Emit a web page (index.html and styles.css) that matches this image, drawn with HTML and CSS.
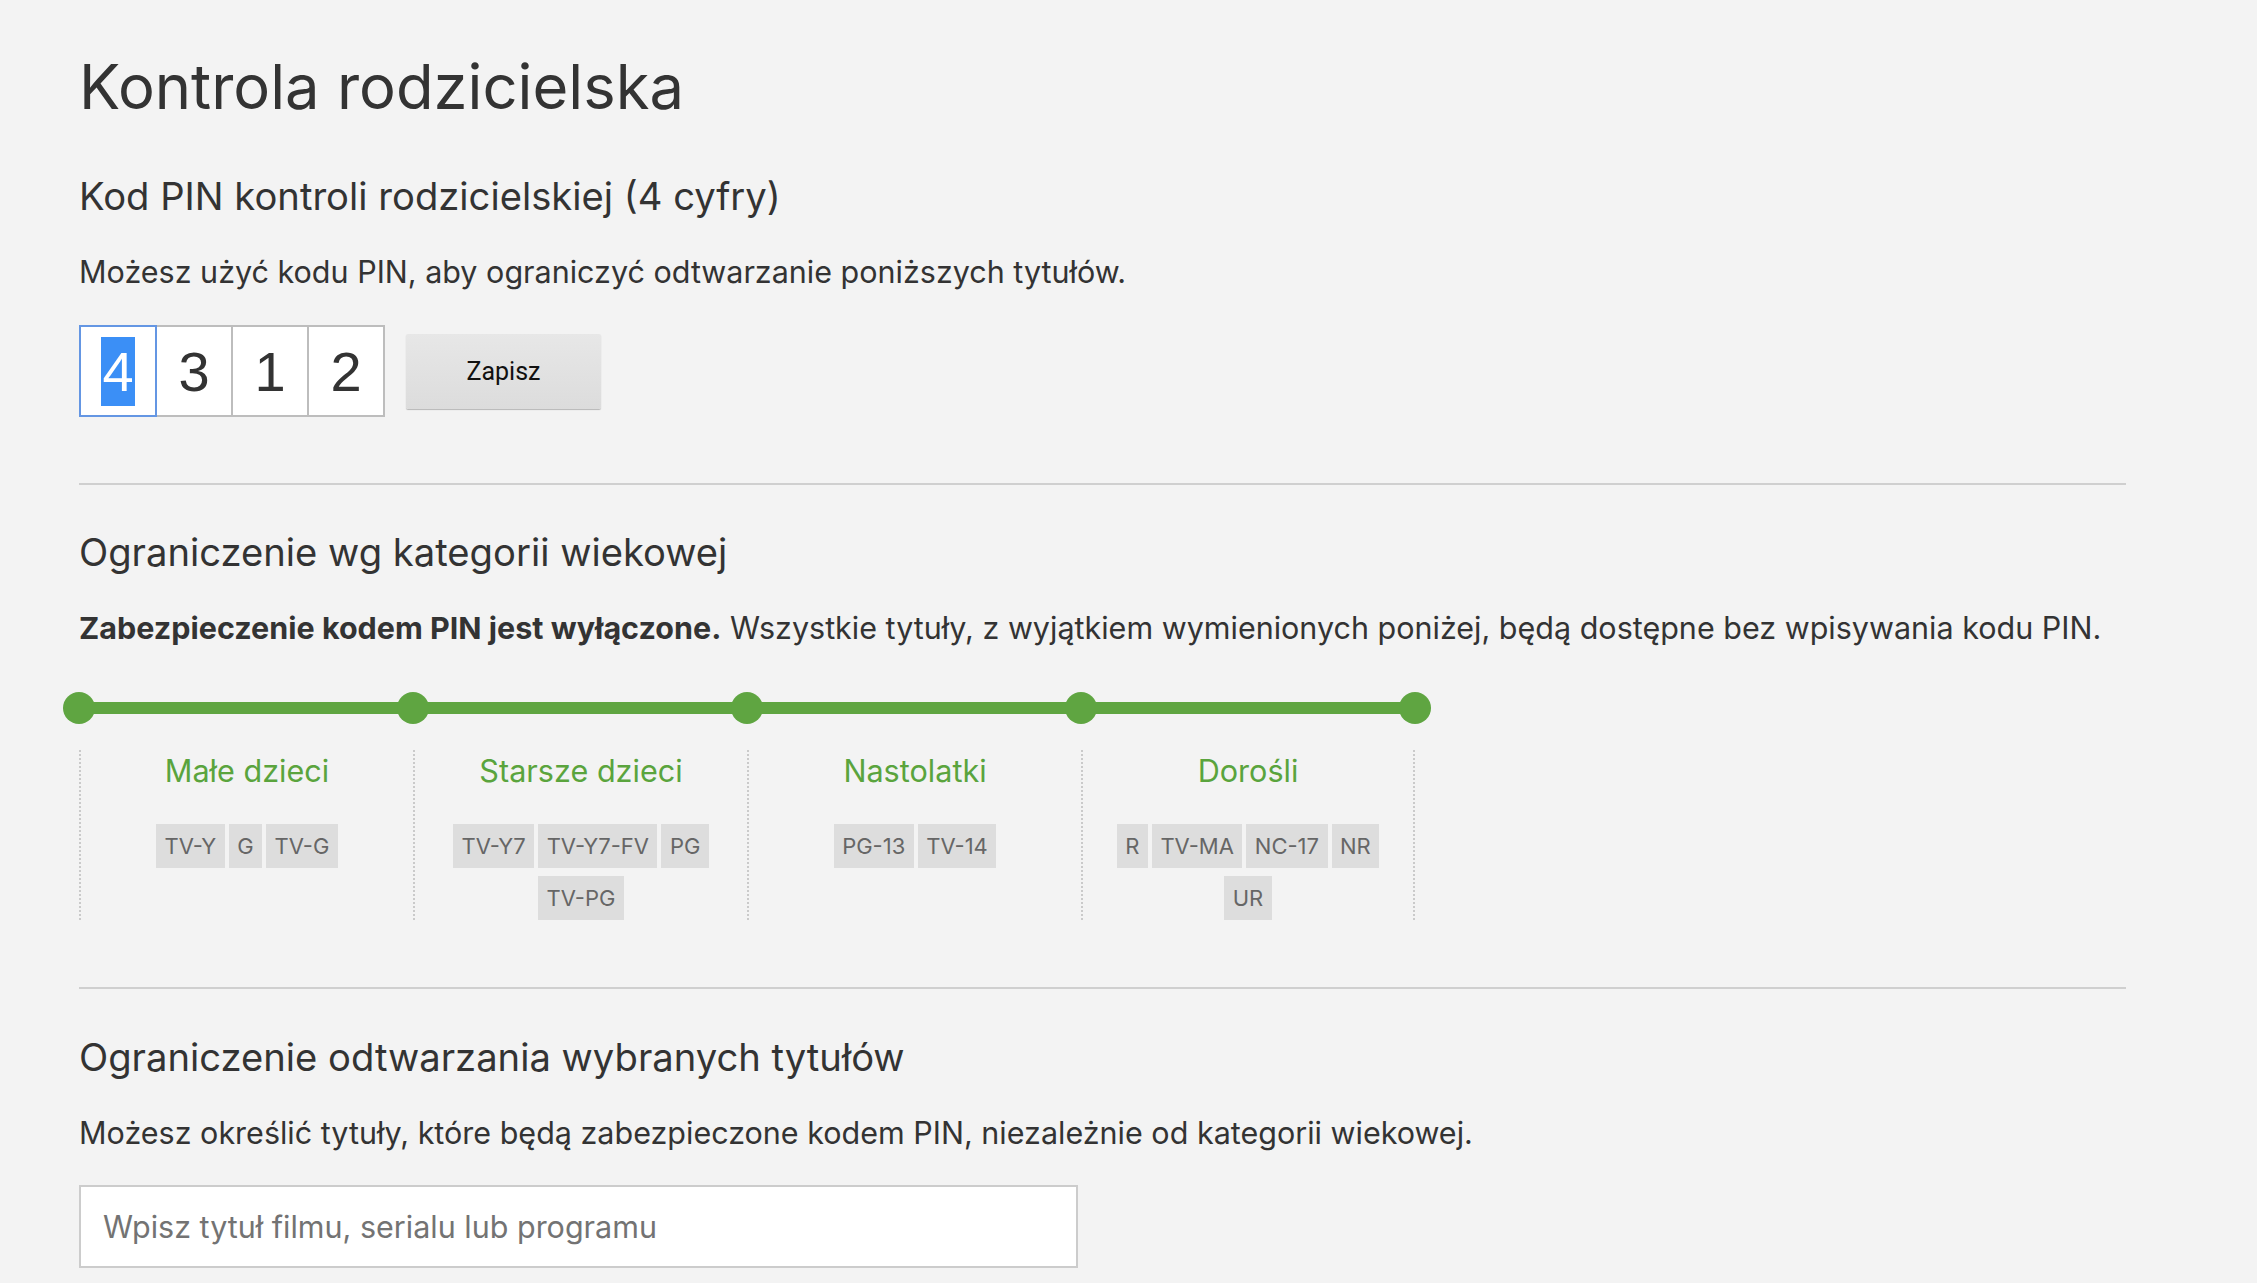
FILE: index.html
```html
<!DOCTYPE html>
<html lang="pl">
<head>
<meta charset="utf-8">
<title>Kontrola rodzicielska</title>
<link rel="stylesheet" href="styles.css">
</head>
<body>
<main class="page">
  <h1 class="title">Kontrola rodzicielska</h1>

  <section class="section section-pin">
    <h2 class="heading">Kod PIN kontroli rodzicielskiej (4 cyfry)</h2>
    <p class="text">Możesz użyć kodu PIN, aby ograniczyć odtwarzanie poniższych tytułów.</p>
    <div class="pin-row">
      <div class="pin">
        <div class="pin-box is-focused"><span class="pin-sel">4</span></div>
        <div class="pin-box">3</div>
        <div class="pin-box">1</div>
        <div class="pin-box">2</div>
      </div>
      <button class="save" type="button">Zapisz</button>
    </div>
  </section>

  <hr class="divider">

  <section class="section section-maturity">
    <h2 class="heading">Ograniczenie wg kategorii wiekowej</h2>
    <p class="text"><strong>Zabezpieczenie kodem PIN jest wyłączone.</strong> Wszystkie tytuły, z wyjątkiem wymienionych poniżej, będą dostępne bez wpisywania kodu PIN.</p>
    <div class="slider">
      <span class="dot"></span><span class="seg"></span>
      <span class="dot"></span><span class="seg"></span>
      <span class="dot"></span><span class="seg"></span>
      <span class="dot"></span><span class="seg"></span>
      <span class="dot"></span>
    </div>
    <div class="levels">
      <div class="level">
        <div class="level-name">Małe dzieci</div>
        <div class="tags"><span class="tag">TV-Y</span><span class="tag">G</span><span class="tag">TV-G</span></div>
      </div>
      <div class="level">
        <div class="level-name">Starsze dzieci</div>
        <div class="tags"><span class="tag">TV-Y7</span><span class="tag">TV-Y7-FV</span><span class="tag">PG</span><span class="tag">TV-PG</span></div>
      </div>
      <div class="level">
        <div class="level-name">Nastolatki</div>
        <div class="tags"><span class="tag">PG-13</span><span class="tag">TV-14</span></div>
      </div>
      <div class="level">
        <div class="level-name">Dorośli</div>
        <div class="tags"><span class="tag">R</span><span class="tag">TV-MA</span><span class="tag">NC-17</span><span class="tag">NR</span><span class="tag">UR</span></div>
      </div>
    </div>
  </section>

  <hr class="divider divider-2">

  <section class="section section-titles">
    <h2 class="heading">Ograniczenie odtwarzania wybranych tytułów</h2>
    <p class="text">Możesz określić tytuły, które będą zabezpieczone kodem PIN, niezależnie od kategorii wiekowej.</p>
    <input class="search" type="text" placeholder="Wpisz tytuł filmu, serialu lub programu">
  </section>
</main>
</body>
</html>
```

FILE: styles.css
```css
html, body {
  margin: 0;
  padding: 0;
  background: #f3f3f3;
}

body {
  font-family: Inter, "Noto Sans", sans-serif;
  color: #333;
}

.page {
  padding: 49px 0 0 79px;
  width: 2047px;
}

.title {
  margin: 0;
  font-size: 61.5px;
  line-height: 76px;
  font-weight: 400;
  color: #333;
}

.heading {
  margin: 0;
  font-size: 38.2px;
  line-height: 46px;
  font-weight: 400;
  color: #333;
}

.text {
  margin: 0;
  font-size: 30.5px;
  line-height: 36px;
  color: #333;
}

.text strong {
  font-weight: 700;
}

.section-pin {
  margin-top: 48px;
}

.section-pin .text {
  margin-top: 35px;
}

.pin-row {
  margin-top: 35px;
  display: flex;
  align-items: center;
}

.pin {
  display: flex;
}

.pin-box {
  width: 78px;
  height: 92px;
  box-sizing: border-box;
  border: 2px solid #bdbdbd;
  background: #fff;
  margin-left: -2px;
  display: flex;
  align-items: center;
  justify-content: center;
  font-family: "Liberation Sans", Arial, sans-serif;
  font-size: 56px;
  color: #333;
}

.pin-box:first-child {
  margin-left: 0;
}

.pin-box.is-focused {
  border-color: #6496e3;
  position: relative;
  z-index: 1;
}

.pin-sel {
  display: inline-block;
  background: #3b8ff6;
  color: #fff;
  line-height: 69px;
  padding: 0 1px;
}

.save {
  margin-left: 21px;
  width: 195px;
  height: 75px;
  border: 0;
  border-radius: 2px;
  background: linear-gradient(#e7e7e7, #dcdcdc);
  box-shadow: 0 1px 1px rgba(0, 0, 0, 0.25);
  font-family: Roboto, "Liberation Sans", sans-serif;
  font-size: 25px;
  color: #111;
}

.divider {
  margin: 66px 0 0;
  border: 0;
  height: 2px;
  background: #cfcfcf;
}

.divider-2 {
  margin-top: 67px;
}

.section-maturity {
  margin-top: 44px;
}

.section-maturity .text {
  margin-top: 35px;
}

.slider {
  margin: 46px 0 0 -16px;
  display: flex;
  align-items: center;
  width: 1368px;
}

.dot {
  width: 32px;
  height: 32px;
  border-radius: 50%;
  background: #5fa541;
  flex: none;
}

.seg {
  flex: 1;
  height: 12px;
  background: #5fa541;
  margin: 0 -2px;
}

.levels {
  margin-top: 26px;
  display: grid;
  grid-template-columns: repeat(4, 334px);
}

.level {
  border-left: 2px dotted #cacaca;
  padding: 2px 14px 0;
  text-align: center;
}

.level:last-child {
  border-right: 2px dotted #cacaca;
}

.level-name {
  font-size: 30.6px;
  line-height: 37px;
  color: #5aa43d;
}

.tags {
  margin-top: 35px;
  display: flex;
  flex-wrap: wrap;
  justify-content: center;
  gap: 8px 4px;
}

.tag {
  background: #dddddd;
  color: #666;
  font-size: 22px;
  line-height: 44px;
  padding: 0 8.5px;
}

.section-titles {
  margin-top: 45px;
}

.section-titles .text {
  margin-top: 35px;
}

.search {
  display: block;
  margin-top: 34px;
  width: 999px;
  height: 83px;
  box-sizing: border-box;
  border: 2px solid #cccccc;
  background: #fff;
  padding: 0 22px;
  font-family: Inter, "Noto Sans", sans-serif;
  font-size: 30.5px;
  color: #333;
}

.search::placeholder {
  color: #737373;
}
```
